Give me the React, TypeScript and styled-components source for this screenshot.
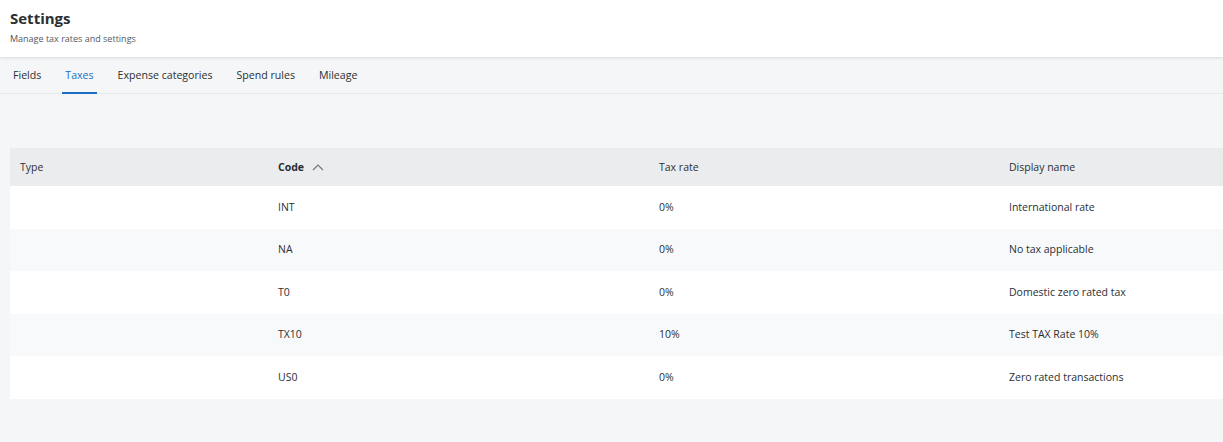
import React from 'react';
import styled, { createGlobalStyle } from 'styled-components';

const GlobalStyle = createGlobalStyle`
  html, body { margin: 0; padding: 0; }
  body {
    background: #f5f6f8;
    font-family: 'Open Sans', 'Liberation Sans', sans-serif;
    color: #2b2f33;
  }
`;

const Page = styled.div`
  min-height: 442px;
  background: #f5f6f8;
`;

const Header = styled.header`
  background: #ffffff;
  padding: 8px 10px 0;
  box-sizing: border-box;
  height: 57px;
  box-shadow: 0 1px 3px rgba(0, 0, 0, 0.12);
  position: relative;
  z-index: 1;
  h1 { margin: 0; font-size: 15px; font-weight: 700; color: #2b2f33; line-height: 20px; }
  p { margin: 4px 0 0; font-size: 9px; color: #53585e; line-height: 13px; }
`;

const Tabs = styled.nav`
  display: flex;
  padding-left: 1px;
  height: 36px;
  border-bottom: 1px solid #e6e8eb;
`;

const Tab = styled.div<{ $active?: boolean }>`
  padding: 0 12px 1px;
  font-size: 10.6px;
  display: flex;
  align-items: center;
  color: ${p => (p.$active ? '#1a6fc4' : '#2b2f33')};
  position: relative;
  &::after {
    content: '';
    display: ${p => (p.$active ? 'block' : 'none')};
    position: absolute;
    left: 9px;
    right: 9px;
    bottom: -1px;
    height: 2px;
    background: #1a6fc4;
  }
`;

const Content = styled.main`
  padding: 54px 0 0 10px;
`;

const Table = styled.div`
  display: grid;
  grid-template-columns: 258px 381px 350px 1fr;
  font-size: 10.5px;
`;

const HeadCell = styled.div<{ $bold?: boolean }>`
  background: #ebecee;
  height: 38px;
  padding: 0 0 1px 10px;
  box-sizing: border-box;
  display: flex;
  align-items: center;
  gap: 8px;
  font-weight: ${p => (p.$bold ? 700 : 400)};
  color: #2b2f33;
`;

const Cell = styled.div<{ $alt?: boolean }>`
  background: ${p => (p.$alt ? '#f8f9fa' : '#ffffff')};
  height: 42.5px;
  padding: 0 0 1px 10px;
  box-sizing: border-box;
  display: flex;
  align-items: center;
  color: #2b2f33;
`;

const rows = [
  { code: 'INT', rate: '0%', name: 'International rate' },
  { code: 'NA', rate: '0%', name: 'No tax applicable' },
  { code: 'T0', rate: '0%', name: 'Domestic zero rated tax' },
  { code: 'TX10', rate: '10%', name: 'Test TAX Rate 10%' },
  { code: 'US0', rate: '0%', name: 'Zero rated transactions' },
];

const SortUp = () => (
  <svg width="12" height="8" viewBox="0 0 12 8" fill="none">
    <path d="M1 7L6 2L11 7" stroke="#6d7883" strokeWidth="1.2" />
  </svg>
);

export default function App() {
  return (
    <Page>
      <GlobalStyle />
      <Header>
        <h1>Settings</h1>
        <p>Manage tax rates and settings</p>
      </Header>
      <Tabs>
        <Tab>Fields</Tab>
        <Tab $active>Taxes</Tab>
        <Tab>Expense categories</Tab>
        <Tab>Spend rules</Tab>
        <Tab>Mileage</Tab>
      </Tabs>
      <Content>
        <Table>
          <HeadCell>Type</HeadCell>
          <HeadCell $bold>Code <SortUp /></HeadCell>
          <HeadCell>Tax rate</HeadCell>
          <HeadCell>Display name</HeadCell>
          {rows.map((r, i) => (
            <React.Fragment key={r.code}>
              <Cell $alt={i % 2 === 1} />
              <Cell $alt={i % 2 === 1}>{r.code}</Cell>
              <Cell $alt={i % 2 === 1}>{r.rate}</Cell>
              <Cell $alt={i % 2 === 1}>{r.name}</Cell>
            </React.Fragment>
          ))}
        </Table>
      </Content>
    </Page>
  );
}
